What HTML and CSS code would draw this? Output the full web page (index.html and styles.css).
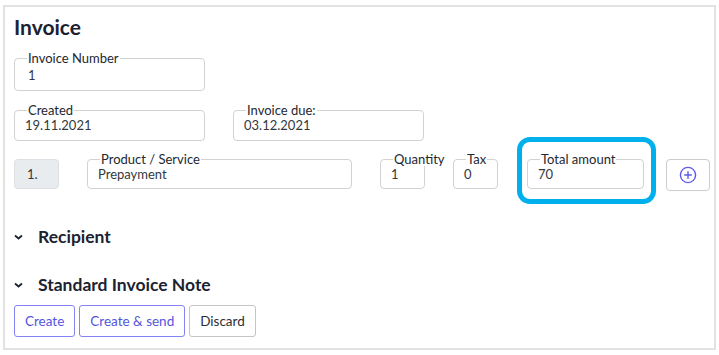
FILE: index.html
```html
<!DOCTYPE html>
<html>
  <head>
    <meta charset="UTF-8" />
    <title>Invoice</title>
    <link rel="stylesheet" href="styles.css">
  </head>
  <body>
    <div class="frame">
      <h1 class="title">Invoice</h1>

      <!-- HEADER FIELDS -->
      <div class="row first-row">
        <fieldset class="field wide">
          <legend>Invoice Number</legend>
          <div class="value">1</div>
        </fieldset>
      </div>

      <div class="row date-row">
        <fieldset class="field wide tight">
          <legend>Created</legend>
          <div class="value shift">19.11.2021</div>
        </fieldset>
        <fieldset class="field wide tight">
          <legend>Invoice due:</legend>
          <div class="value shift">03.12.2021</div>
        </fieldset>
      </div>

      <!-- LINE ITEM -->
      <div class="row item-row">
        <div class="pos">1.</div>
        <fieldset class="field item product">
          <legend>Product / Service</legend>
          <div class="value shift">Prepayment</div>
        </fieldset>
        <fieldset class="field item small">
          <legend>Quantity</legend>
          <div class="value shift">1</div>
        </fieldset>
        <fieldset class="field item small">
          <legend>Tax</legend>
          <div class="value shift">0</div>
        </fieldset>
        <div class="total-wrap">
          <fieldset class="field item total">
            <legend>Total amount</legend>
            <div class="value shift">70</div>
          </fieldset>
        </div>
        <button class="add-btn" type="button">
          <svg width="18" height="18" viewBox="0 0 18 18">
            <circle cx="9" cy="9" r="7.6" fill="none" stroke="#5b5bef" stroke-width="1.4" />
            <path d="M9 5.2v7.6M5.2 9h7.6" stroke="#5b5bef" stroke-width="1.4" />
          </svg>
        </button>
      </div>

      <!-- COLLAPSED SECTIONS -->
      <div class="section recipient">
        <svg class="chevron" width="9" height="6" viewBox="0 0 9 6">
          <polyline points="1,1.5 4.5,4.5 8,1.5" fill="none" stroke="#1b2230" stroke-width="1.8" />
        </svg>
        <span>Recipient</span>
      </div>
      <div class="section note">
        <svg class="chevron" width="9" height="6" viewBox="0 0 9 6">
          <polyline points="1,1.5 4.5,4.5 8,1.5" fill="none" stroke="#1b2230" stroke-width="1.8" />
        </svg>
        <span>Standard Invoice Note</span>
      </div>

      <!-- ACTIONS -->
      <div class="actions">
        <button class="btn primary" type="button">Create</button>
        <button class="btn primary" type="button">Create &amp; send</button>
        <button class="btn" type="button">Discard</button>
      </div>
    </div>
  </body>
</html>
```

FILE: styles.css
```css
body {
  margin: 0;
  font-family: Lato, "Open Sans", sans-serif;
  color: #2b2f36;
  background: #ffffff;
}
.frame {
  box-sizing: border-box;
  margin: 5px 3px 0 3px;
  height: 345px;
  border: 2px solid #e2e2e2;
  padding: 8px 5px 8px 9px;
}
.title {
  margin: 0;
  font-size: 21px;
  line-height: 24px;
  font-weight: bold;
  color: #1b2230;
}
.row {
  display: flex;
  gap: 28px;
  align-items: flex-start;
}
.row > * {
  flex-shrink: 0;
}
.first-row {
  margin-top: 12px;
}
.date-row {
  margin-top: 12px;
}
.item-row {
  margin-top: 11px;
}
.field {
  margin: 0;
  padding: 0 0 7px 13px;
  border: 1px solid #d2d2d2;
  border-radius: 4px;
  min-width: 0;
}
.field legend {
  padding: 0 1px;
  margin-left: -1px;
  font-size: 13px;
  line-height: 14px;
  color: #222830;
  white-space: nowrap;
}
.value {
  padding-top: 2px;
  font-size: 13px;
  line-height: 16px;
  color: #333840;
}
.value.shift {
  margin-left: -3px;
}
.wide {
  width: 191px;
  box-sizing: border-box;
}
.tight .value {
  padding-top: 0;
}
.item {
  box-sizing: border-box;
  padding-bottom: 6px;
}
.item .value {
  padding-top: 0;
}
.product {
  width: 265px;
}
.small {
  width: 45px;
}
.total {
  width: 117px;
}
.total-wrap {
  position: relative;
  margin-left: 1px;
}
.total-wrap::after {
  content: "";
  position: absolute;
  left: -10px;
  right: -12px;
  top: -15px;
  bottom: -15px;
  border: 5px solid #00b0ec;
  border-radius: 13px;
}
.pos {
  box-sizing: border-box;
  width: 45px;
  height: 30px;
  margin-top: 7px;
  padding-left: 12px;
  background: #e9ecef;
  border: 1px solid #dcdfe3;
  border-radius: 4px;
  font-size: 13px;
  line-height: 28px;
  color: #333840;
}
.add-btn {
  box-sizing: border-box;
  width: 44px;
  height: 32px;
  margin-top: 7px;
  margin-left: -6px;
  padding: 0;
  background: #ffffff;
  border: 1px solid #cccccc;
  border-radius: 4px;
  display: flex;
  align-items: center;
  justify-content: center;
}
.section {
  display: flex;
  align-items: center;
  gap: 15px;
  font-size: 17.5px;
  line-height: 24px;
  font-weight: bold;
  color: #1b2230;
}
.chevron {
  margin-left: 0;
}
.recipient {
  margin-top: 34px;
}
.note {
  margin-top: 24px;
}
.actions {
  display: flex;
  gap: 4px;
  margin-top: 8px;
}
.btn {
  height: 32px;
  padding: 0 10px;
  background: #ffffff;
  border: 1px solid #c4c4c4;
  border-radius: 3px;
  font-family: Lato, "Open Sans", sans-serif;
  font-size: 13.5px;
  color: #2b2f36;
}
.btn.primary {
  border-color: #8484f2;
  color: #5555e0;
}
```
